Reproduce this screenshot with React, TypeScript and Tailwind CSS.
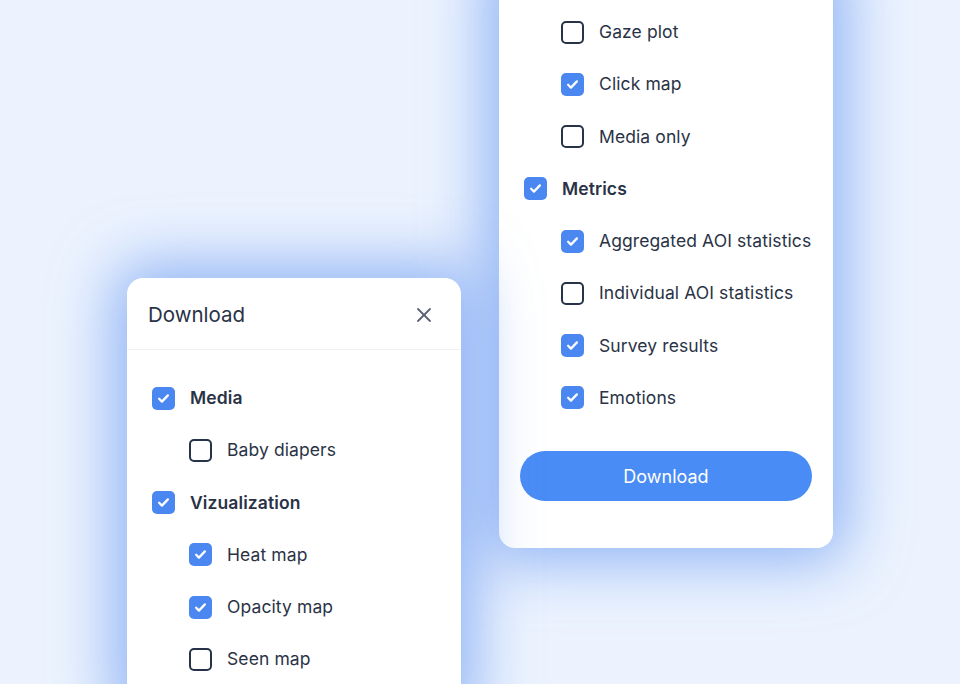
import { X } from "lucide-react";

type Option = {
  label: string;
  checked: boolean;
  level: 0 | 1;
};

const exportOptions: Option[] = [
  { label: "Media", checked: true, level: 0 },
  { label: "Baby diapers", checked: false, level: 1 },
  { label: "Vizualization", checked: true, level: 0 },
  { label: "Heat map", checked: true, level: 1 },
  { label: "Opacity map", checked: true, level: 1 },
  { label: "Seen map", checked: false, level: 1 },
];

const moreOptions: Option[] = [
  { label: "Gaze plot", checked: false, level: 1 },
  { label: "Click map", checked: true, level: 1 },
  { label: "Media only", checked: false, level: 1 },
  { label: "Metrics", checked: true, level: 0 },
  { label: "Aggregated AOI statistics", checked: true, level: 1 },
  { label: "Individual AOI statistics", checked: false, level: 1 },
  { label: "Survey results", checked: true, level: 1 },
  { label: "Emotions", checked: true, level: 1 },
];

function CheckBox({ checked }: { checked: boolean }) {
  if (checked) {
    return (
      <span className="flex h-[23px] w-[23px] shrink-0 items-center justify-center rounded-[5px] bg-[#4a87f0]">
        <svg width="15" height="15" viewBox="0 0 24 24" fill="none">
          <path
            d="M5 12.5l4.5 4.5 9.5-10"
            stroke="white"
            strokeWidth="3.6"
            strokeLinecap="round"
            strokeLinejoin="round"
          />
        </svg>
      </span>
    );
  }
  return (
    <span className="h-[23px] w-[23px] shrink-0 rounded-[5px] border-[2.4px] border-[#263349] bg-white" />
  );
}

function OptionRow({ option }: { option: Option }) {
  return (
    <div
      className={`flex h-[52.25px] items-center gap-[15px] ${
        option.level === 1 ? "pl-[37px]" : ""
      }`}
    >
      <CheckBox checked={option.checked} />
      <span
        className={`text-[17.5px] tracking-[0.1px] text-[#2a3346] ${
          option.level === 0 ? "font-semibold" : ""
        }`}
      >
        {option.label}
      </span>
    </div>
  );
}

export default function App() {
  return (
    <div
      className="relative h-[684px] w-full overflow-hidden bg-[#ecf3fe]"
      style={{ fontFamily: "Inter, 'Noto Sans', sans-serif" }}
    >
      {/* second step of the export dialog, scrolled down */}
      <div className="absolute left-[499px] top-[-40px] w-[334px] rounded-2xl bg-white px-[21px] pb-[47px] pt-[46px] shadow-[0_0_60px_14px_rgba(88,142,240,0.62)]">
        <div className="pl-[4px]">
          {moreOptions.map((option) => (
            <OptionRow key={option.label} option={option} />
          ))}
        </div>
        <button
          type="button"
          className="mt-[27px] h-[50px] w-full rounded-full bg-[#4a8cf5] text-[18px] text-white"
        >
          Download
        </button>
      </div>

      {/* first step of the export dialog */}
      <div className="absolute left-[127px] top-[278px] w-[334px] rounded-2xl bg-white shadow-[0_0_60px_14px_rgba(88,142,240,0.62)]">
        <div className="flex h-[72px] items-center justify-between border-b border-[#eef1f6] pl-[21px] pr-[25px] pt-[3px]">
          <h2 className="text-[20.5px] text-[#2a3346]">Download</h2>
          <X className="h-[24px] w-[24px] text-[#5c6275]" strokeWidth={1.8} />
        </div>
        <div className="px-[25px] pt-[22px] pb-[30px]">
          {exportOptions.map((option) => (
            <OptionRow key={option.label} option={option} />
          ))}
        </div>
      </div>
    </div>
  );
}
